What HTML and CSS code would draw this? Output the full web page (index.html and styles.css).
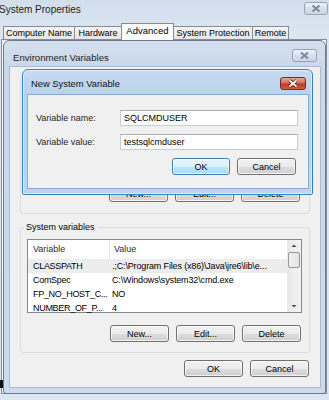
FILE: index.html
```html
<!DOCTYPE html>
<html>
<head>
<meta charset="utf-8">
<title>System Properties</title>
<link rel="stylesheet" href="styles.css">
</head>
<body>
<div class="sysprops">
  <div class="sp-titlebar">
    <span class="sp-title">System Properties</span>
    <span class="close inactive sp-close">
      <svg width="24" height="13" viewBox="0 0 24 13"><path d="M8.5 3.5 L15.5 9.5 M15.5 3.5 L8.5 9.5" stroke="#7d8898" stroke-width="2" fill="none"/></svg>
    </span>
  </div>
  <div class="tabs">
    <div class="tab t-cn">Computer Name</div>
    <div class="tab t-hw">Hardware</div>
    <div class="tab t-adv active">Advanced</div>
    <div class="tab t-sp">System Protection</div>
    <div class="tab t-rm">Remote</div>
  </div>
  <div class="sp-panel"></div>
</div>
<div class="desk-bit"></div>

<div class="win env">
  <div class="win-title">
    <span class="win-caption">Environment Variables</span>
    <span class="close inactive env-close">
      <svg width="25" height="13" viewBox="0 0 25 13"><path d="M9 3.5 L16 9.5 M16 3.5 L9 9.5" stroke="#7d8898" stroke-width="2" fill="none"/></svg>
    </span>
  </div>
  <div class="win-body env-body">
    <div class="user-group">
      <div class="btn-row grp-btns">
        <button class="btn">New...</button>
        <button class="btn">Edit...</button>
        <button class="btn">Delete</button>
      </div>
    </div>
    <fieldset class="sys-group">
      <legend>System variables</legend>
      <div class="list">
        <div class="list-main">
          <div class="lv-row lv-head"><span class="c1">Variable</span><span class="c2">Value</span></div>
          <div class="lv-row sel"><span class="c1">CLASSPATH</span><span class="c2">.;C:\Program Files (x86)\Java\jre6\lib\e...</span></div>
          <div class="lv-row"><span class="c1">ComSpec</span><span class="c2">C:\Windows\system32\cmd.exe</span></div>
          <div class="lv-row"><span class="c1">FP_NO_HOST_C...</span><span class="c2">NO</span></div>
          <div class="lv-row"><span class="c1">NUMBER_OF_P...</span><span class="c2">4</span></div>
        </div>
        <div class="vscroll">
          <svg class="arr" width="14" height="12" viewBox="0 0 14 12"><path d="M4.5 7 L7 4.5 L9.5 7 Z" fill="#4d4d4d"/></svg>
          <div class="thumb"></div>
          <div class="track"></div>
          <svg class="arr" width="14" height="12" viewBox="0 0 14 12"><path d="M4.5 5 L7 7.5 L9.5 5 Z" fill="#4d4d4d"/></svg>
        </div>
      </div>
      <div class="btn-row grp-btns">
        <button class="btn">New...</button>
        <button class="btn">Edit...</button>
        <button class="btn">Delete</button>
      </div>
    </fieldset>
    <div class="btn-row env-btns">
      <button class="btn">OK</button>
      <button class="btn">Cancel</button>
    </div>
  </div>
</div>

<div class="win newvar">
  <div class="win-title nv-title">
    <span class="win-caption">New System Variable</span>
    <span class="close red nv-close">
      <svg width="26" height="13" viewBox="0 0 26 13"><path d="M9.5 3.5 L16.5 9.5 M16.5 3.5 L9.5 9.5" stroke="#5a1a10" stroke-width="3.4" fill="none"/><path d="M9.5 3.5 L16.5 9.5 M16.5 3.5 L9.5 9.5" stroke="#ffffff" stroke-width="1.8" fill="none"/></svg>
    </span>
  </div>
  <div class="win-body nv-body">
    <div class="field">
      <label class="flabel">Variable name:</label>
      <div class="input">SQLCMDUSER</div>
    </div>
    <div class="field">
      <label class="flabel">Variable value:</label>
      <div class="input">testsqlcmduser</div>
    </div>
    <div class="btn-row nv-btns">
      <button class="btn default nv-ok">OK</button>
      <button class="btn">Cancel</button>
    </div>
  </div>
</div>
</body>
</html>
```

FILE: styles.css
```css
* { box-sizing: border-box; }
html, body { margin: 0; padding: 0; }
body {
  width: 329px;
  height: 400px;
  overflow: hidden;
  position: relative;
  font-family: "Liberation Sans", Arial, sans-serif;
  font-size: 9px;
  color: #000;
  background: #dae5f1;
}

/* ---------- System Properties (background window) ---------- */
.sysprops {
  height: 400px;
  display: flex;
  flex-direction: column;
  background: linear-gradient(#d2deec, #dde7f3 40px, #dce6f2);
}
.sp-titlebar {
  height: 23px;
  display: flex;
  align-items: flex-start;
}
.sp-title {
  font-size: 10px;
  margin-left: -1px;
  padding-top: 4px;
  color: #1e1e1e;
}
.sp-close { margin: 2px 1px 0 auto; }

.close {
  display: block;
  height: 13px;
  border-radius: 3px;
  line-height: 0;
}
.close svg { display: block; }
.close.inactive {
  border: 1px solid #95a3b6;
  background: linear-gradient(#eef2f8, #d6e0ec 50%, #cbd7e6);
}
.close.inactive svg { margin: -1px; }
.close.red {
  border: 1px solid #7c2a1e;
  background: linear-gradient(#e8a595, #d2705c 45%, #bd3a22 55%, #cf5e40);
}
.close.red svg { margin: -1px; }

.tabs {
  height: 16px;
  display: flex;
  align-items: flex-end;
  padding-left: 3px;
  position: relative;
  z-index: 1;
}
.tab {
  height: 13px;
  border: 1px solid #898c95;
  border-right: none;
  border-bottom: none;
  background: linear-gradient(#f4f4f4, #e6e6e6);
  text-align: center;
  line-height: 12px;
  font-size: 9px;
  white-space: nowrap;
  color: #000;
}
.t-cn { width: 71px; }
.t-hw { width: 47px; }
.t-adv { width: 53px; }
.t-sp { width: 78px; border-left: none; }
.t-rm { width: 37px; border-right: 1px solid #898c95; }
.tab.active {
  height: 17px;
  margin-bottom: -1px;
  border-right: 1px solid #898c95;
  background: #fff;
  line-height: 13px;
  font-size: 9.5px;
}
.sp-panel {
  flex: 1;
  margin: 0 2px 6px 1px;
  border: 1px solid #898c95;
  background: #fbfbfb;
}
.desk-bit {
  position: absolute;
  left: 0;
  top: 380px;
  width: 3px;
  height: 8px;
  background: #111;
}

/* ---------- generic window ---------- */
.win {
  position: absolute;
  border: 1px solid #6d7b8d;
  border-radius: 6px 6px 3px 3px;
  display: flex;
  flex-direction: column;
}
.win-title {
  display: flex;
  align-items: flex-start;
}
.win-caption {
  color: #1e1e1e;
  white-space: nowrap;
}
.win-body { background: #f0f0f0; }

/* ---------- Environment Variables ---------- */
.env {
  left: 3px;
  top: 40px;
  width: 323px;
  height: 354px;
  padding: 0 5px 6px 6px;
  background: linear-gradient(#d4e0ee, #c9d8ea 26px, #cddbec);
}
.env .win-title { height: 26px; }
.env .win-caption {
  font-size: 9.6px;
  padding: 11px 0 0 3px;
}
.env-close { margin: 8px 3px 0 auto; }
.env-body {
  height: 320px;
  padding: 10px 10px 0 10px;
  display: flex;
  flex-direction: column;
  box-shadow: 0 0 0 1px #a9bbd1;
}
.user-group {
  height: 137px;
  border: 1px solid #d5dfe5;
  border-radius: 3px;
  display: flex;
  flex-direction: column;
  justify-content: flex-end;
  padding: 0 8px 11px 6px;
}

.sys-group {
  margin: 7px 0 0 0;
  padding: 6px 7px 10px 6px;
  border: 1px solid #d5dfe5;
  border-radius: 3px;
  min-width: 0;
}
.sys-group legend {
  padding: 0 2px;
  margin-left: -3px;
  line-height: 12px;
  font-size: 9px;
}
.list {
  height: 74px;
  border: 1px solid #828790;
  background: #fff;
  display: flex;
}
.list-main { flex: 1; min-width: 0; }
.lv-row {
  display: flex;
  height: 14px;
  line-height: 14px;
  white-space: nowrap;
}
.lv-row .c1 { width: 82px; flex: none; padding-left: 5px; letter-spacing: -0.3px; }
.lv-row .c2 { flex: 1; padding-left: 2px; overflow: hidden; letter-spacing: -0.15px; }
.lv-head { height: 19px; line-height: 18px; color: #2c2c2c; }
.lv-head .c1 { border-right: 1px solid #e3e6ea; letter-spacing: 0; }
.lv-head .c2 { padding-left: 4px; letter-spacing: 0; }
.lv-row.sel { background: #ececec; }
.vscroll {
  width: 14px;
  display: flex;
  flex-direction: column;
  background: linear-gradient(90deg, #e8e8e8, #f4f4f4);
}
.vscroll .arr { display: block; flex: none; }
.thumb {
  height: 16px;
  margin: 0 1px 0 1px;
  border: 1px solid #979797;
  border-radius: 2px;
  background: linear-gradient(90deg, #f2f2f2, #e2e2e2);
}
.track { flex: 1; }

.btn-row {
  display: flex;
  justify-content: flex-end;
  gap: 7px;
}
.btn {
  font-family: inherit;
  font-size: 9px;
  width: 59px;
  height: 17px;
  padding: 0;
  margin: 0;
  border: 1px solid #707070;
  border-radius: 3px;
  color: #000;
  background: linear-gradient(#f2f2f2, #ebebeb 50%, #dddddd 51%, #cfcfcf);
  box-shadow: inset 0 0 0 1px rgba(255,255,255,0.75);
}
.btn.default {
  border-color: #3c7fb1;
  background: linear-gradient(#eaf6fd, #d9f0fc 50%, #bee6fd 51%, #a7d9f5);
}
.grp-btns { margin-right: 1px; }
.sys-group .grp-btns { margin-top: 12px; }
.env-btns { margin-top: 7px; padding-right: 1px; }

/* ---------- New System Variable ---------- */
.newvar {
  left: 22px;
  top: 69px;
  width: 291px;
  height: 126px;
  padding: 0 4px 6px 5px;
  border-color: #2f86c6;
  border-radius: 6px 6px 2px 2px;
  background: linear-gradient(#c7dbf1, #b9d1ec 25px, #bcd4ee);
  box-shadow: inset 0 0 0 1px rgba(255,255,255,0.55);
}
.nv-title { height: 25px; }
.newvar .win-caption {
  font-size: 9.4px;
  padding: 8px 0 0 3px;
  color: #111;
}
.nv-close { margin: 7px 2px 0 auto; }
.nv-body {
  height: 93px;
  padding: 15px 10px 10px 8px;
  box-shadow: 0 0 0 1px #8bacd2;
}
.field {
  display: flex;
  align-items: center;
  height: 16px;
  margin-bottom: 8px;
}
.flabel { width: 84px; color: #1e1e1e; }
.input {
  flex: 1;
  height: 16px;
  border: 1px solid #c5ccd6;
  border-top-color: #abadb3;
  background: #fff;
  padding-left: 3px;
  line-height: 14px;
}
.nv-btns { margin-top: 3px; margin-right: 2px; }
.nv-ok { width: 58px; }
```
